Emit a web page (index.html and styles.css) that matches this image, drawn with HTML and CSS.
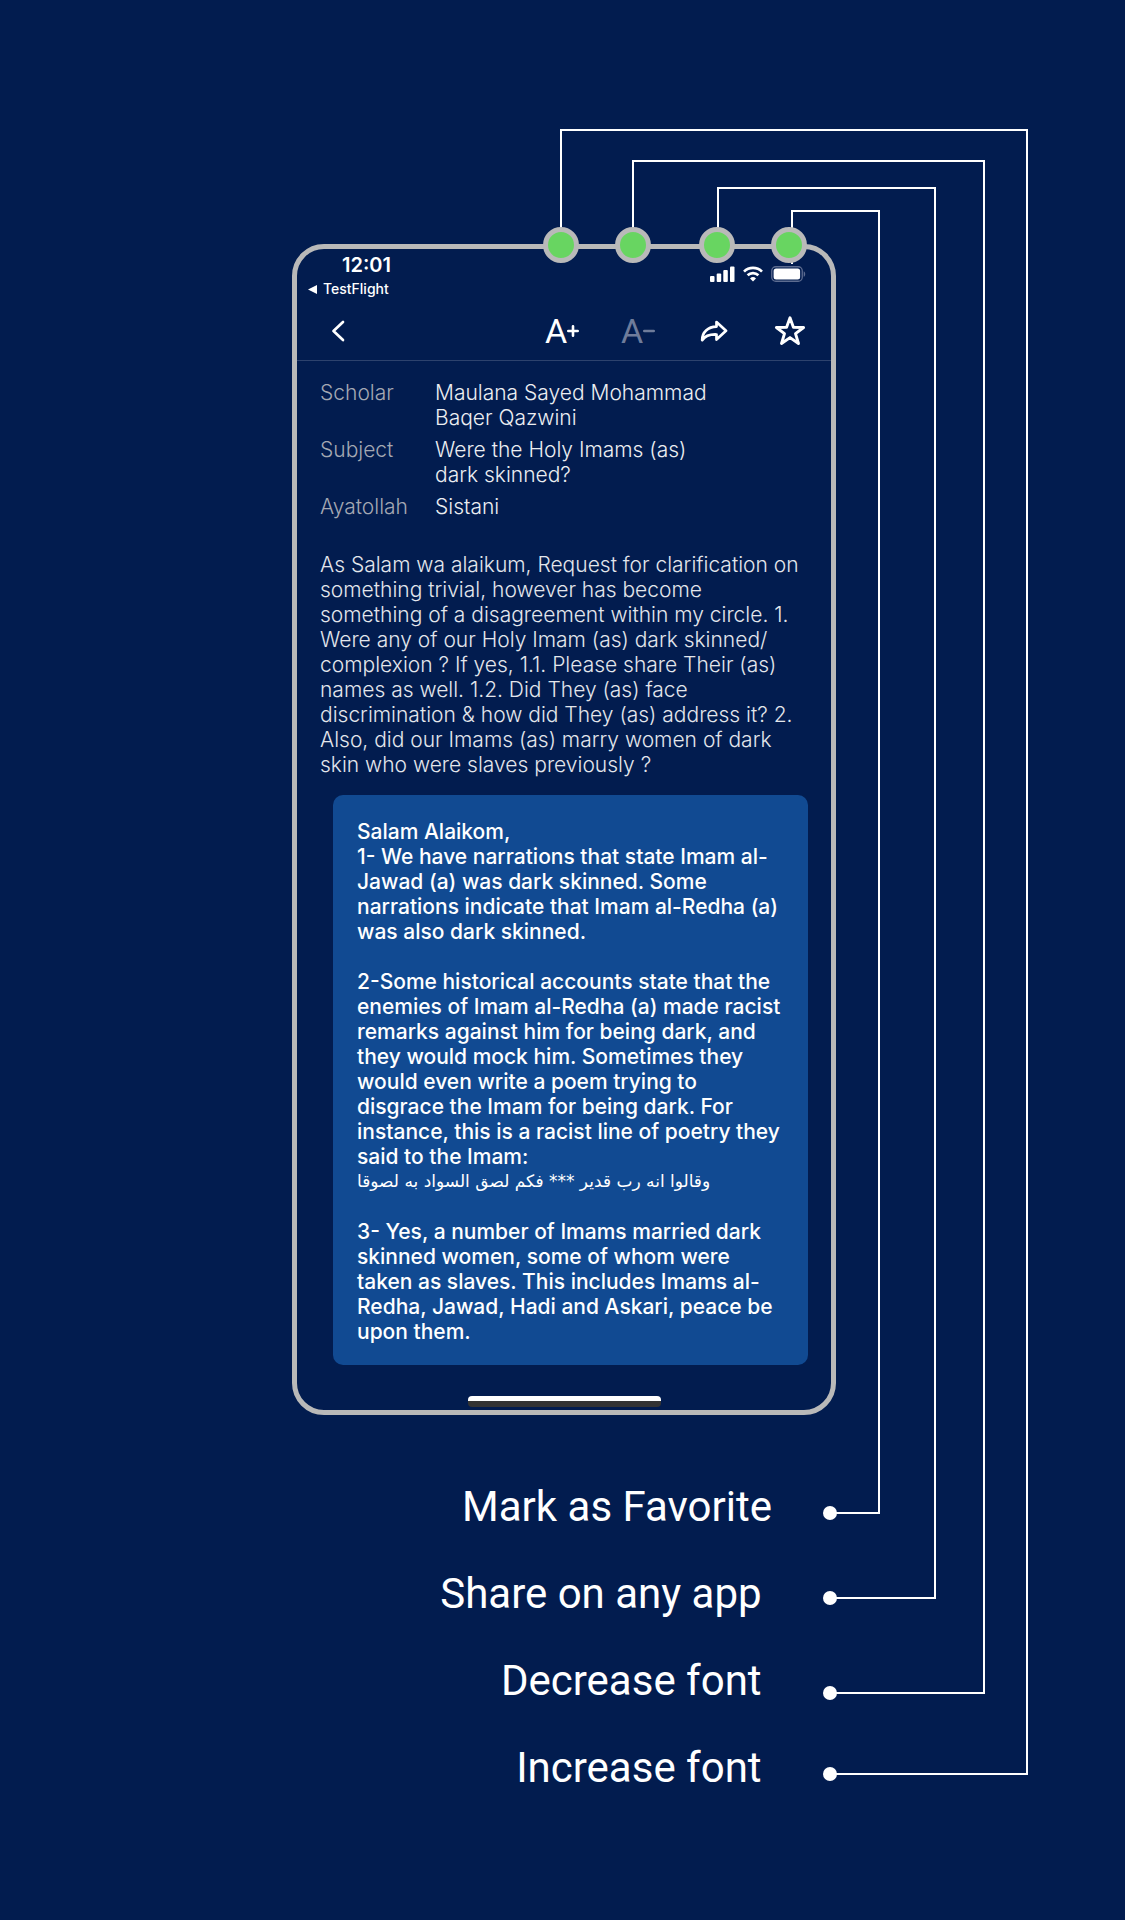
FILE: index.html
```html
<!DOCTYPE html>
<html lang="en">
<head>
<meta charset="utf-8">
<meta name="viewport" content="width=device-width, initial-scale=1">
<title>Answer screen guide</title>
<link rel="stylesheet" href="styles.css">
</head>
<body>
<main class="stage">
  <article class="phone">
    <div class="status">
      <div class="status-left">
        <time class="clock">12:01</time>
        <a class="return" href="#">
          <svg width="9" height="9" viewBox="0 0 9 9" aria-hidden="true"><path d="M9 0v9L0 4.500z" fill="currentColor"/></svg>
          TestFlight
        </a>
      </div>
      <div class="status-icons">
        <svg width="25" height="16" viewBox="0 0 25 16" fill="#fff" aria-label="Signal"><rect x="0" y="10" width="4.500" height="6" rx="1"/><rect x="6.700" y="7.500" width="4.500" height="8.500" rx="1"/><rect x="13.300" y="4" width="4.500" height="12" rx="1"/><rect x="20" y="0.500" width="4.500" height="15.500" rx="1"/></svg>
        <svg width="20" height="16" viewBox="0 0 20 16" fill="none" stroke="#fff" stroke-width="2.700" aria-label="Wi-Fi"><path d="M1 5.600a12.800 12.800 0 0 1 18 0"/><path d="M4.600 9.300a7.700 7.700 0 0 1 10.800 0"/><path d="M10 15.600 7 12.400a4.300 4.300 0 0 1 6 0z" fill="#fff" stroke="none"/></svg>
        <svg width="35" height="16" viewBox="0 0 35 16" aria-label="Battery"><rect x="0.750" y="0.750" width="30.500" height="14.500" rx="4" fill="none" stroke="#5d6c90" stroke-width="1.300"/><rect x="2.600" y="2.600" width="26.500" height="10.800" rx="2.500" fill="#fff"/><path d="M32.700 5.200c2 .8 2 4.800 0 5.600z" fill="#5d6c90"/></svg>
      </div>
    </div>
    <nav class="toolbar" aria-label="Answer tools">
      <button class="tool back" aria-label="Back"><svg width="14" height="22" viewBox="0 0 14 22"><path d="M12 2 2.500 11l9.500 9" fill="none" stroke="currentColor" stroke-width="2.700" stroke-linecap="round" stroke-linejoin="round"/></svg></button>
      <button class="tool" aria-label="Increase font">A<svg width="12" height="12" viewBox="0 0 12 12"><path d="M1.300 6h9.400M6 1.300v9.400" stroke="currentColor" stroke-width="2.600" stroke-linecap="round"/></svg></button>
      <button class="tool" aria-label="Decrease font" disabled>A<svg width="12" height="12" viewBox="0 0 12 12"><path d="M1.300 6h9.400" stroke="currentColor" stroke-width="2.600" stroke-linecap="round"/></svg></button>
      <button class="tool" aria-label="Share"><svg width="28" height="22" viewBox="0 0 28 22"><path d="M16.500 2 26 10.800l-9.500 8.700v-5C9 14.200 5 16 2.200 20.200 2 12 8 6.800 16.500 6.600z" fill="none" stroke="currentColor" stroke-width="2.700" stroke-linejoin="round"/></svg></button>
      <button class="tool" aria-label="Mark as favorite"><svg width="32" height="32" viewBox="0 0 32 32"><path d="M16 2.800 19.400 12.300 29.600 12.500 21.500 18.700 24.500 28.500 16 22.600 7.500 28.500 10.500 18.700 2.400 12.500 12.600 12.300z" fill="none" stroke="currentColor" stroke-width="2.900" stroke-linejoin="round"/></svg></button>
    </nav>
    <dl class="facts">
      <dt>Scholar</dt><dd>Maulana Sayed Mohammad<br>Baqer Qazwini</dd>
      <dt>Subject</dt><dd>Were the Holy Imams (as)<br>dark skinned?</dd>
      <dt>Ayatollah</dt><dd>Sistani</dd>
    </dl>
    <p class="question">As Salam wa alaikum, Request for clarification on<br>something trivial, however has become<br>something of a disagreement within my circle. 1.<br>Were any of our Holy Imam (as) dark skinned/<br>complexion ? If yes, 1.1. Please share Their (as)<br>names as well. 1.2. Did They (as) face<br>discrimination &amp; how did They (as) address it? 2.<br>Also, did our Imams (as) marry women of dark<br>skin who were slaves previously ?</p>
    <section class="answer">
      <p>Salam Alaikom,<br>1- We have narrations that state Imam al-<br>Jawad (a) was dark skinned. Some<br>narrations indicate that Imam al-Redha (a)<br>was also dark skinned.</p>
      <div>
        <p>2-Some historical accounts state that the<br>enemies of Imam al-Redha (a) made racist<br>remarks against him for being dark, and<br>they would mock him. Sometimes they<br>would even write a poem trying to<br>disgrace the Imam for being dark. For<br>instance, this is a racist line of poetry they<br>said to the Imam:</p>
        <p class="verse" lang="ar" dir="rtl">وقالوا انه رب قدير *** فكم لصق السواد به لصوقا</p>
      </div>
      <p>3- Yes, a number of Imams married dark<br>skinned women, some of whom were<br>taken as slaves. This includes Imams al-<br>Redha, Jawad, Hadi and Askari, peace be<br>upon them.</p>
    </section>
    <div class="home"></div>
  </article>
  <ul class="labels">
    <li>Mark as Favorite</li>
    <li>Share on any app&nbsp;</li>
    <li>Decrease font&nbsp;</li>
    <li>Increase font&nbsp;</li>
  </ul>
  <div class="connector increase"><span class="drop"></span><span class="run"></span></div>
  <div class="connector decrease"><span class="drop"></span><span class="run"></span></div>
  <div class="connector share"><span class="drop"></span><span class="run"></span></div>
  <div class="connector favorite"><span class="drop"></span><span class="run"></span></div>
  <span class="pin pin-increase"></span>
  <span class="pin pin-decrease"></span>
  <span class="pin pin-share"></span>
  <span class="pin pin-favorite"></span>
</main>
</body>
</html>
```
FILE: styles.css
```css
* { box-sizing: border-box; }
body {
  margin: 0;
  padding: 244px 289px 109px 292px;
  background: #021c4f;
  color: #fff;
  font-family: Inter, "Liberation Sans", sans-serif;
}
p, dl, dd, ul { margin: 0; padding: 0; }
svg { display: block; flex: none; }

.stage { position: relative; }

.phone {
  border: 5px solid #b9b9b9;
  border-radius: 32px;
  padding-bottom: 3px;
}

.status {
  display: flex;
  justify-content: space-between;
  align-items: flex-start;
  padding: 4px 25px 0 11px;
  line-height: 24px;
}
.clock { display: block; padding-left: 34px; font-size: 20px; font-weight: 600; }
.return {
  display: flex;
  align-items: center;
  gap: 6px;
  color: #fff;
  font-size: 14px;
  font-weight: 500;
  text-decoration: none;
}
.status-icons { display: flex; gap: 8px; padding-top: 13px; }

.toolbar {
  display: flex;
  align-items: center;
  gap: 36px;
  height: 60px;
  padding: 0 21px;
  border-bottom: 1px solid #2d426d;
}
.tool {
  display: flex;
  align-items: center;
  justify-content: center;
  width: 40px;
  height: 44px;
  padding: 0;
  border: 0;
  background: none;
  color: #fff;
  font: 400 34px Roboto, sans-serif;
}
.tool:disabled { color: #6f7c9b; }
.back { margin-right: auto; }

.facts {
  display: grid;
  grid-template-columns: 92px 1fr;
  gap: 7px 23px;
  padding: 19px 23px 33px;
  font-size: 21px;
  font-weight: 300;
  line-height: 25px;
}
.facts dt { color: #a4a8b3; }
.facts dd { color: #eceef2; }

.question {
  padding: 0 23px 18px;
  color: #e3e6ec;
  font-size: 21px;
  font-weight: 300;
  line-height: 25px;
  white-space: nowrap;
}

.answer {
  display: grid;
  gap: 25px;
  margin: 0 23px 0 36px;
  padding: 24px 24px 21px;
  border-radius: 10px;
  background: #114a92;
  font-size: 21px;
  font-weight: 500;
  line-height: 25px;
  white-space: nowrap;
}
.verse {
  width: fit-content;
  font-family: "DejaVu Sans", sans-serif;
  font-size: 17px;
  font-weight: 400;
}

.home {
  width: 193px;
  height: 11px;
  margin: 31px auto 0;
  border-top: 5px solid #fff;
  border-radius: 4px;
  background: #333;
}

.labels {
  padding: 48px 64px 0 0;
  list-style: none;
  text-align: right;
  font: 400 42px/87px Roboto, sans-serif;
}

/* Call-out lines run round the phone's right side, measured from its right edge. */
.connector {
  position: absolute;
  border: solid #fff;
  border-width: 2px 2px 0 0;
  pointer-events: none;
}
.drop, .run { position: absolute; background: #fff; }
.drop { top: 0; left: 0; width: 2px; height: var(--drop); }
.run { right: 0; bottom: 0; width: var(--run); height: 2px; }
.run::before {
  content: "";
  position: absolute;
  top: -6px;
  left: -7px;
  width: 14px;
  height: 14px;
  border-radius: 50%;
  background: #fff;
}
.increase { --drop: 98px; --run: 196px; top: -115px; right: -192px; bottom: 36px; width: 468px; }
.decrease { --drop: 68px; --run: 153px; top: -84px; right: -149px; bottom: 117px; width: 353px; }
.share { --drop: 40px; --run: 104px; top: -57px; right: -100px; bottom: 212px; width: 219px; }
.favorite { --drop: 52px; --run: 48px; top: -34px; right: -44px; bottom: 297px; width: 89px; }

.pin {
  position: absolute;
  top: -17px;
  width: 36px;
  height: 36px;
  border: 5px solid #b9b9b9;
  border-radius: 50%;
  background: #68d561;
}
.pin-increase { right: 257px; }
.pin-decrease { right: 185px; }
.pin-share { right: 101px; }
.pin-favorite { right: 29px; }
```
